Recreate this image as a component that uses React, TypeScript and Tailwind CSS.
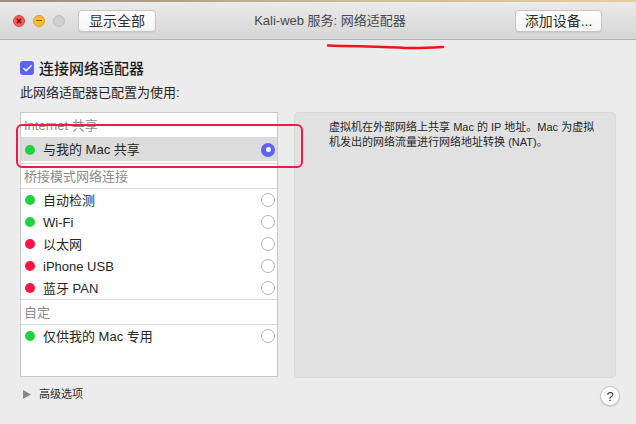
import { Check } from 'lucide-react';

const font = { fontFamily: '"Liberation Sans", "Noto Sans CJK SC", sans-serif' };

type Row = { label: string; dot: 'green' | 'red'; selected?: boolean };

function Dot({ color }: { color: 'green' | 'red' }) {
  return (
    <span
      className={
        color === 'green'
          ? 'w-[10px] h-[10px] rounded-full bg-[#1fd33c] shrink-0'
          : 'w-[10px] h-[10px] rounded-full bg-[#fc1443] shrink-0'
      }
    />
  );
}

function Radio({ on }: { on?: boolean }) {
  if (on) {
    return (
      <span className="w-[14px] h-[14px] rounded-full bg-[#5d63f2] flex items-center justify-center shrink-0">
        <span className="w-[5px] h-[5px] rounded-full bg-white" />
      </span>
    );
  }
  return <span className="w-[14px] h-[14px] rounded-full border border-[#b3b3b3] bg-white shrink-0" />;
}

function ListRow({ row }: { row: Row }) {
  return (
    <div
      className={
        row.selected
          ? 'h-[23px] flex items-center pl-[4px] pr-[2px] bg-[#dcdcdc]'
          : 'h-[22px] flex items-center pl-[4px] pr-[2px]'
      }
    >
      <Dot color={row.dot} />
      <span className="ml-[8px] text-[13px] text-[#262626] flex-1 leading-none">{row.label}</span>
      <Radio on={row.selected} />
    </div>
  );
}

function Header({ text }: { text: string }) {
  return (
    <div className="h-[25px] flex items-center pl-[3px] pt-[1px] text-[13px] text-[#8c8c8c] border-b border-[#dadada]">
      {text}
    </div>
  );
}

const bridged: Row[] = [
  { label: '自动检测', dot: 'green' },
  { label: 'Wi-Fi', dot: 'green' },
  { label: '以太网', dot: 'red' },
  { label: 'iPhone USB', dot: 'red' },
  { label: '蓝牙 PAN', dot: 'red' },
];

export default function App() {
  return (
    <div style={font} className="relative w-[636px] h-[424px] overflow-hidden bg-[#ececec] flex flex-col">
      {/* desktop strip */}
      <div className="h-[2px] bg-gradient-to-r from-[#9a8a7a] via-[#c9b79a] to-[#e4cf9c]" />

      {/* Title bar */}
      <div className="h-[38px] bg-gradient-to-b from-[#ebebeb] to-[#d5d5d5] border-b border-[#b1b1b1] flex items-center relative">
        <div className="flex items-center gap-[8px] pl-[13px]">
          <span className="w-[12px] h-[12px] rounded-full bg-[#fc5b57] border border-[#e0443e] flex items-center justify-center">
            <svg width="6" height="6" viewBox="0 0 6 6">
              <path d="M0.8 0.8 L5.2 5.2 M5.2 0.8 L0.8 5.2" stroke="#5a0a08" strokeWidth="1.3" />
            </svg>
          </span>
          <span className="w-[12px] h-[12px] rounded-full bg-[#fdbb2e] border border-[#dea123] flex items-center justify-center">
            <span className="w-[6px] h-[1.5px] bg-[#8a5a00]" />
          </span>
          <span className="w-[12px] h-[12px] rounded-full bg-[#d0d0d0] border border-[#c0c0c0]" />
        </div>
        <button className="relative z-10 ml-[13px] w-[78px] h-[22px] rounded-[4px] bg-gradient-to-b from-white to-[#f4f4f4] border border-[#c6c6c6] shadow-[0_1px_0_rgba(0,0,0,0.06)] text-[14px] text-[#2e2e2e] leading-none">
          显示全部
        </button>
        <div className="absolute left-0 right-0 top-0 bottom-0 flex items-center justify-center pointer-events-none">
          <span className="text-[13px] text-[#4a4a4a] ml-[24px]">Kali-web 服务: 网络适配器</span>
        </div>
        <button className="relative z-10 ml-auto mr-[34px] w-[87px] h-[22px] rounded-[4px] bg-gradient-to-b from-white to-[#f4f4f4] border border-[#c6c6c6] shadow-[0_1px_0_rgba(0,0,0,0.06)] text-[14px] text-[#2e2e2e] leading-none">
          添加设备...
        </button>
      </div>

      {/* Content */}
      <div className="flex-1 flex flex-col px-[20px]">
        <div className="mt-[20px] h-[16px] flex items-center">
          <span className="w-[14px] h-[14px] rounded-[3px] bg-[#5e62f2] flex items-center justify-center">
            <Check size={11} strokeWidth={3} color="white" />
          </span>
          <span className="ml-[5px] text-[15px] font-medium text-[#1e1e1e] leading-none">连接网络适配器</span>
        </div>
        <div className="mt-[9px] h-[16px] flex items-center text-[13px] text-[#262626]">此网络适配器已配置为使用:</div>

        <div className="mt-[11px] flex gap-[16px] h-[266px]">
          {/* list */}
          <div className="w-[260px] h-[265px] bg-white border border-[#c8c8c8] flex flex-col">
            <Header text="Internet 共享" />
            <ListRow row={{ label: '与我的 Mac 共享', dot: 'green', selected: true }} />
            <div className="h-[3px] border-b border-[#dadada]" />
            <Header text="桥接模式网络连接" />
            {bridged.map((r) => (
              <ListRow key={r.label} row={r} />
            ))}
            <div className="border-b border-[#dadada]" />
            <Header text="自定" />
            <ListRow row={{ label: '仅供我的 Mac 专用', dot: 'green' }} />
          </div>

          {/* description panel */}
          <div className="w-[324px] h-[266px] bg-[#e1e1e1] border border-[#d9d9d9] rounded-[4px] pl-[34px] pt-[7px]">
            <p className="text-[11px] leading-[15px] text-[#262626]">
              虚拟机在外部网络上共享 Mac 的 IP 地址。Mac 为虚拟
              <br />
              机发出的网络流量进行网络地址转换 (NAT)。
            </p>
          </div>
        </div>

        <div className="flex items-start mt-[8px]">
          <div className="flex items-center ml-[3px]">
            <svg width="8" height="9" viewBox="0 0 8 9">
              <path d="M0 0 L8 4.5 L0 9 Z" fill="#8a8a8a" />
            </svg>
            <span className="ml-[8px] text-[11px] text-[#2a2a2a]">高级选项</span>
          </div>
          <button className="ml-auto mr-[-4px] w-[20px] h-[20px] rounded-full bg-white border border-[#c4c4c4] shadow-[0_1px_1px_rgba(0,0,0,0.15)] flex items-center justify-center text-[13px] text-[#333] leading-none">
            ?
          </button>
        </div>
      </div>

      {/* red annotations */}
      <div className="absolute left-[16px] top-[124px] w-[287px] h-[44px] border-[2.5px] border-[#f5174a] rounded-[6px] pointer-events-none" />
      <svg className="absolute left-0 top-0 pointer-events-none" width="636" height="60">
        <path d="M328 45.5 C360 46.5 390 47 405 48 C420 48.5 435 47.5 443 47" stroke="#f5121c" strokeWidth="2.5" fill="none" strokeLinecap="round" />
      </svg>
    </div>
  );
}
